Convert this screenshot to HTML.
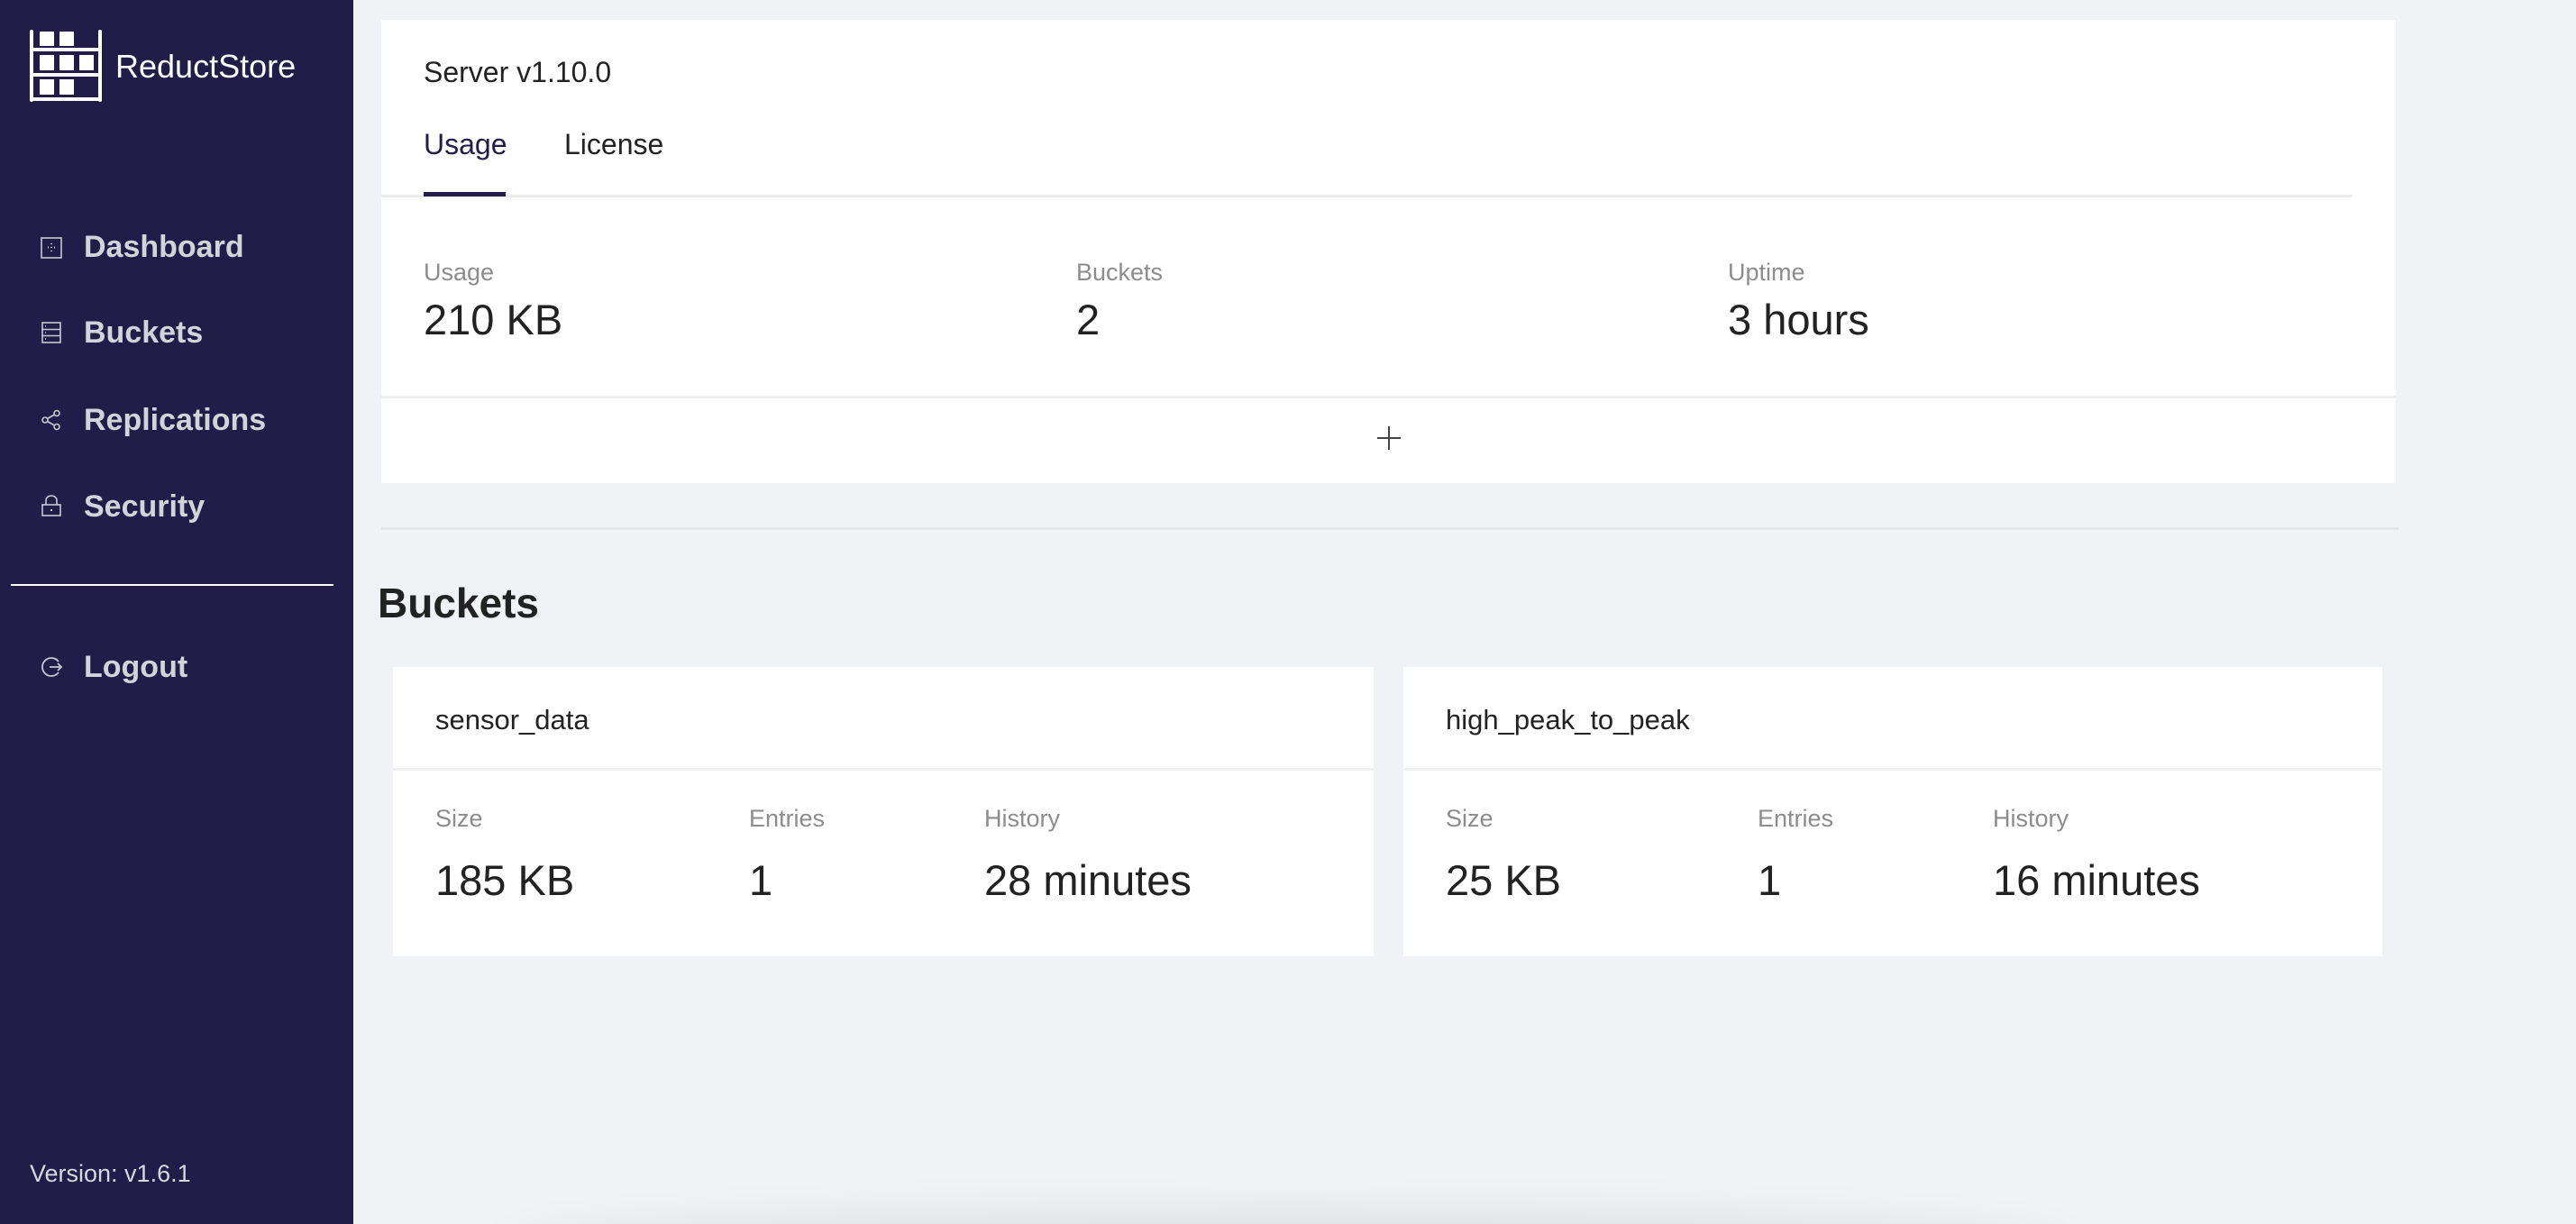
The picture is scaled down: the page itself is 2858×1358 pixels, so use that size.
<!DOCTYPE html>
<html style="overflow:hidden;width:2858px;height:1358px"><head><meta charset="utf-8"><style>
*{margin:0;padding:0;box-sizing:border-box}
body{width:2858px;height:1358px;background:#f0f2f5;font-family:"Liberation Sans",Arial,sans-serif;position:relative;overflow:hidden}
.side{position:absolute;left:0;top:0;width:392px;height:1358px;background:#221c48;z-index:2}
.abs{position:absolute;white-space:nowrap}
.nav{position:absolute;left:93px;font-size:34px;font-weight:bold;color:#d3d3da;line-height:40px}
.ic{position:absolute;left:44px;width:26px;height:26px}
.card{position:absolute;background:#fff}
.lbl{position:absolute;font-size:27px;color:#8c8c8c;line-height:32px;white-space:nowrap}
.val{position:absolute;font-size:47px;color:#222;line-height:56px;white-space:nowrap}
.hl{position:absolute;height:3px;background:#f0f0f0}
</style></head><body>
<div class="side">
<svg class="abs" style="left:30px;top:30px" width="86" height="86" viewBox="30 30 86 86">
<g fill="#fff">
<rect x="33" y="33" width="4" height="80" rx="2"/><rect x="109" y="33" width="4" height="80" rx="2"/>
<rect x="33" y="53" width="80" height="4"/><rect x="33" y="81" width="80" height="4"/><rect x="33" y="108" width="80" height="4"/>
<rect x="44" y="35" width="16" height="16"/><rect x="66" y="35" width="16" height="16"/>
<rect x="44" y="61" width="16" height="17"/><rect x="66" y="61" width="16" height="17"/><rect x="88" y="61" width="16" height="17"/>
<rect x="44" y="88" width="16" height="17"/><rect x="66" y="88" width="16" height="17"/>
</g></svg>
<div class="abs" style="left:128px;top:53px;font-size:36px;color:#fff;line-height:42px">ReductStore</div>

<svg class="ic" style="top:262px" viewBox="0 0 26 26" fill="none" stroke="#c8c8d0" stroke-width="1.6"><rect x="2" y="2" width="22" height="22"/><g stroke-width="2"><path d="M13 8v1M13 12v1M13 16v1M9 12.5h1M16 12.5h1"/></g></svg>
<div class="nav" style="top:254px">Dashboard</div>
<svg class="ic" style="top:356px" viewBox="0 0 26 26" fill="none" stroke="#c8c8d0" stroke-width="1.6"><rect x="3" y="2" width="20" height="22"/><path d="M3 9.5h20M3 16.5h20M6 6h1M6 13h1M6 20h1"/></svg>
<div class="nav" style="top:349px">Buckets</div>
<svg class="ic" style="top:453px" viewBox="0 0 26 26" fill="none" stroke="#c8c8d0" stroke-width="1.6"><circle cx="6" cy="13" r="3"/><circle cx="19" cy="5.5" r="3"/><circle cx="19" cy="20.5" r="3"/><path d="M8.6 11.5l7.8-4.5M8.6 14.5l7.8 4.5"/></svg>
<div class="nav" style="top:446px">Replications</div>
<svg class="ic" style="top:548px" viewBox="0 0 26 26" fill="none" stroke="#c8c8d0" stroke-width="1.6"><rect x="3" y="12" width="20" height="12"/><path d="M7 12V7a6 5 0 0 1 12 0v5"/><path d="M13 17v2" stroke-width="2"/></svg>
<div class="nav" style="top:542px">Security</div>
<div class="abs" style="left:12px;top:648px;width:358px;height:2px;background:#fff"></div>
<svg class="ic" style="top:727px" viewBox="0 0 26 26" fill="none" stroke="#c8c8d0" stroke-width="1.8"><path d="M21 7A10 10 0 1 0 21 19"/><path d="M11 13h13M20 9l4 4-4 4"/></svg>
<div class="nav" style="top:720px">Logout</div>
<div class="abs" style="left:33px;top:1286px;font-size:27px;color:#d8d8e0;line-height:32px">Version: v1.6.1</div>
</div>

<div class="card" style="left:423px;top:22px;width:2235px;height:514px">
<div class="abs" style="left:47px;top:39px;font-size:32px;color:#222;line-height:38px">Server v1.10.0</div>
<div class="abs" style="left:47px;top:119px;font-size:32px;color:#221c48;line-height:38px">Usage</div>
<div class="abs" style="left:203px;top:119px;font-size:32px;color:#222;line-height:38px">License</div>
<div class="abs" style="left:0;top:194px;width:2187px;height:3px;background:#ebebeb"></div>
<div class="abs" style="left:47px;top:191px;width:91px;height:5px;background:#221c48"></div>
<div class="lbl" style="left:47px;top:264px">Usage</div>
<div class="val" style="left:47px;top:305px">210 KB</div>
<div class="lbl" style="left:771px;top:264px">Buckets</div>
<div class="val" style="left:771px;top:305px">2</div>
<div class="lbl" style="left:1494px;top:264px">Uptime</div>
<div class="val" style="left:1494px;top:305px">3 hours</div>
<div class="hl" style="left:0;top:417px;width:2235px"></div>
<svg class="abs" style="left:1104px;top:450px" width="28" height="28"><path d="M14 1v26M1 14h26" stroke="#444" stroke-width="2"/></svg>
</div>
<div class="abs" style="left:423px;top:585px;width:2238px;height:3px;background:#e4e5e8"></div>
<div class="abs" style="left:419px;top:642px;font-size:46px;font-weight:bold;color:#222;line-height:54px">Buckets</div>

<div class="card" style="left:436px;top:740px;width:1088px;height:321px">
<div class="abs" style="left:47px;top:40px;font-size:31px;color:#222;line-height:38px">sensor_data</div>
<div class="hl" style="left:0;top:112px;width:1088px"></div>
<div class="lbl" style="left:47px;top:152px">Size</div><div class="val" style="left:47px;top:209px">185 KB</div>
<div class="lbl" style="left:395px;top:152px">Entries</div><div class="val" style="left:395px;top:209px">1</div>
<div class="lbl" style="left:656px;top:152px">History</div><div class="val" style="left:656px;top:209px">28 minutes</div>
</div>
<div class="card" style="left:1557px;top:740px;width:1086px;height:321px">
<div class="abs" style="left:47px;top:40px;font-size:31px;color:#222;line-height:38px">high_peak_to_peak</div>
<div class="hl" style="left:0;top:112px;width:1086px"></div>
<div class="lbl" style="left:47px;top:152px">Size</div><div class="val" style="left:47px;top:209px">25 KB</div>
<div class="lbl" style="left:393px;top:152px">Entries</div><div class="val" style="left:393px;top:209px">1</div>
<div class="lbl" style="left:654px;top:152px">History</div><div class="val" style="left:654px;top:209px">16 minutes</div>
</div>
<div style="position:absolute;left:0;top:1200px;width:2858px;height:158px;overflow:hidden">
<div style="position:absolute;left:580px;top:170px;width:1700px;height:40px;border-radius:50%;box-shadow:0 0 50px 25px rgba(0,0,0,0.08)"></div>
</div>
</body></html>
